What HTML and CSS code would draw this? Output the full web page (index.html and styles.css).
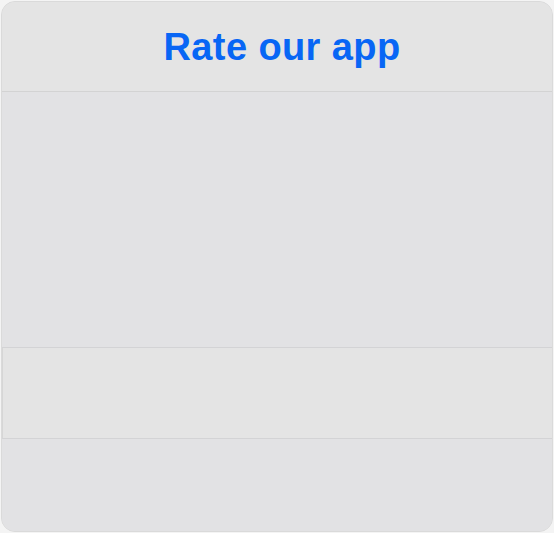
FILE: index.html
```html
<!DOCTYPE html>
<html>
<head>
<meta charset="utf-8">
<link rel="stylesheet" href="styles.css">
</head>
<body>
<div class="page">
  <div class="card">
    <div class="header"><h1 class="title">Rate our app</h1></div>
    <div class="content"></div>
    <div class="row"></div>
    <div class="footer"></div>
  </div>
</div>
</body>
</html>
```
FILE: styles.css
```css
html, body {
  margin: 0;
  padding: 0;
  background: #f4f4f4;
}
.page {
  padding: 1px;
  width: 554px;
  height: 533px;
  box-sizing: border-box;
}
.card {
  width: 552px;
  height: 531px;
  box-sizing: border-box;
  border: 1px solid #dadada;
  border-radius: 14px;
  overflow: hidden;
  display: flex;
  flex-direction: column;
  background: #e2e2e4;
}
.header {
  height: 90px;
  flex: none;
  box-sizing: border-box;
  padding-left: 10px;
  background: #e4e4e4;
  border-bottom: 1px solid #d3d3d3;
  display: flex;
  align-items: center;
  justify-content: center;
}
.title {
  margin: 0;
  font-family: "Liberation Sans", Arial, sans-serif;
  font-weight: 600;
  font-size: 38px;
  letter-spacing: 0.4px;
  color: #0866f5;
  line-height: 1;
  padding-top: 1px;
}
.content {
  height: 255px;
  flex: none;
  background: #e2e2e4;
  border-bottom: 1px solid #d3d3d5;
}
.row {
  height: 90px;
  flex: none;
  background: #e4e4e4;
  border-left: 1px solid #d6d6d6;
  border-bottom: 1px solid #d3d3d5;
}
.footer {
  flex: 1;
  background: #e2e2e4;
}
```
